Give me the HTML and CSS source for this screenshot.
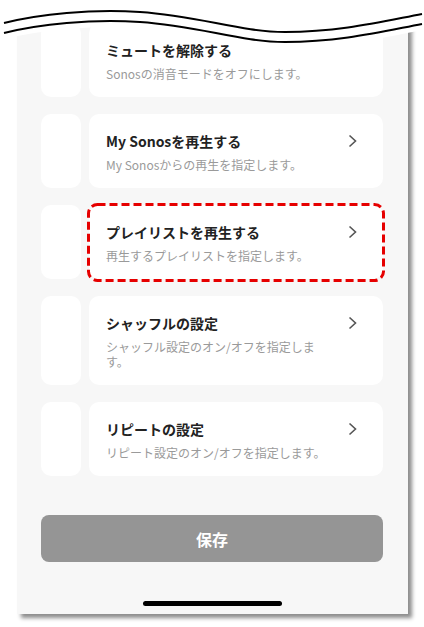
FILE: index.html
```html
<!DOCTYPE html>
<html lang="ja">
<head>
<meta charset="utf-8">
<link rel="stylesheet" href="styles.css">
</head>
<body>
<div class="page">
  <div class="screen">
    <div class="list">
      <div class="row">
        <div class="side"></div>
        <div class="card">
          <div class="head"><span class="title">ミュートを解除する</span></div>
          <div class="sub">Sonosの消音モードをオフにします。</div>
        </div>
      </div>
      <div class="row">
        <div class="side"></div>
        <div class="card">
          <div class="head"><span class="title">My Sonosを再生する</span><svg class="chev" width="9" height="14" viewBox="0 0 9 14"><polyline points="1.5,1.5 7.5,7 1.5,12.5" fill="none" stroke="#555" stroke-width="1.6"/></svg></div>
          <div class="sub">My Sonosからの再生を指定します。</div>
        </div>
      </div>
      <div class="row">
        <div class="side"></div>
        <div class="card marked">
          <div class="head"><span class="title">プレイリストを再生する</span><svg class="chev" width="9" height="14" viewBox="0 0 9 14"><polyline points="1.5,1.5 7.5,7 1.5,12.5" fill="none" stroke="#555" stroke-width="1.6"/></svg></div>
          <div class="sub">再生するプレイリストを指定します。</div>
          <svg class="dash" width="298" height="79" viewBox="0 0 298 79"><rect x="1.5" y="1.5" width="295" height="76" rx="9" ry="9" fill="none" stroke="#e60000" stroke-width="3" stroke-dasharray="8 4"/></svg>
        </div>
      </div>
      <div class="row">
        <div class="side"></div>
        <div class="card">
          <div class="head"><span class="title">シャッフルの設定</span><svg class="chev" width="9" height="14" viewBox="0 0 9 14"><polyline points="1.5,1.5 7.5,7 1.5,12.5" fill="none" stroke="#555" stroke-width="1.6"/></svg></div>
          <div class="sub">シャッフル設定のオン/オフを指定します。</div>
        </div>
      </div>
      <div class="row">
        <div class="side"></div>
        <div class="card">
          <div class="head"><span class="title">リピートの設定</span><svg class="chev" width="9" height="14" viewBox="0 0 9 14"><polyline points="1.5,1.5 7.5,7 1.5,12.5" fill="none" stroke="#555" stroke-width="1.6"/></svg></div>
          <div class="sub">リピート設定のオン/オフを指定します。</div>
        </div>
      </div>
    </div>
    <div class="save">保存</div>
    <div class="home"></div>
  </div>
  <svg class="tear" width="424" height="56" viewBox="0 0 424 56">
    <path d="M0,0 H424 V23 L422,24 C380,32 340,42 285,42 C240,42 200,26 140,22 C90,19 40,24 4,33 L0,34 Z" fill="#fff"/>
    <path d="M4,33 C40,24 90,19 140,22 C200,26 240,42 285,42 C340,42 380,32 422,24" fill="none" stroke="#fff" stroke-width="12"/>
    <path d="M4,23 C40,14 90,9 140,12 C200,16 240,32 285,32 C340,32 380,22 422,14" fill="none" stroke="#000" stroke-width="2"/>
    <path d="M4,33 C40,24 90,19 140,22 C200,26 240,42 285,42 C340,42 380,32 422,24" fill="none" stroke="#000" stroke-width="2"/>
  </svg>
</div>
</body>
</html>
```

FILE: styles.css
```css
html, body {
  margin: 0;
  padding: 0;
  background: #fff;
}
body {
  font-family: "Noto Sans CJK JP", "Noto Sans", sans-serif;
  width: 424px;
  height: 627px;
  overflow: hidden;
}
.page {
  position: relative;
  width: 424px;
  height: 627px;
}
.screen {
  margin-left: 17px;
  width: 391px;
  height: 614px;
  background: #f7f7f7;
  box-shadow: 4px 4px 4px rgba(0, 0, 0, 0.45);
  display: flex;
  flex-direction: column;
  box-sizing: border-box;
  padding: 23px 25px 0 24px;
}
.list {
  display: flex;
  flex-direction: column;
  gap: 17px;
}
.row {
  display: flex;
  gap: 8px;
}
.side {
  width: 40px;
  background: #fff;
  border-radius: 10px;
  flex: none;
}
.card {
  position: relative;
  flex: 1;
  background: #fff;
  border-radius: 10px;
  padding: 17px 26px 16px 17px;
}
.head {
  display: flex;
  justify-content: space-between;
  align-items: center;
  height: 20px;
}
.title {
  font-size: 14px;
  font-weight: bold;
  color: #222;
  line-height: 20px;
  white-space: nowrap;
}
.chev {
  flex: none;
}
.sub {
  margin-top: 6px;
  font-size: 12px;
  line-height: 15px;
  color: #9a9a9a;
  max-width: 220px;
}
.dash {
  position: absolute;
  left: -2px;
  top: -2px;
}
.save {
  margin-top: 39px;
  height: 47px;
  border-radius: 8px;
  background: #959595;
  color: #fff;
  font-size: 16px;
  font-weight: bold;
  display: flex;
  align-items: center;
  justify-content: center;
}
.home {
  margin: 39px auto 0;
  width: 139px;
  height: 5px;
  border-radius: 3px;
  background: #000;
}
.tear {
  position: absolute;
  left: 0;
  top: 0;
}
```
